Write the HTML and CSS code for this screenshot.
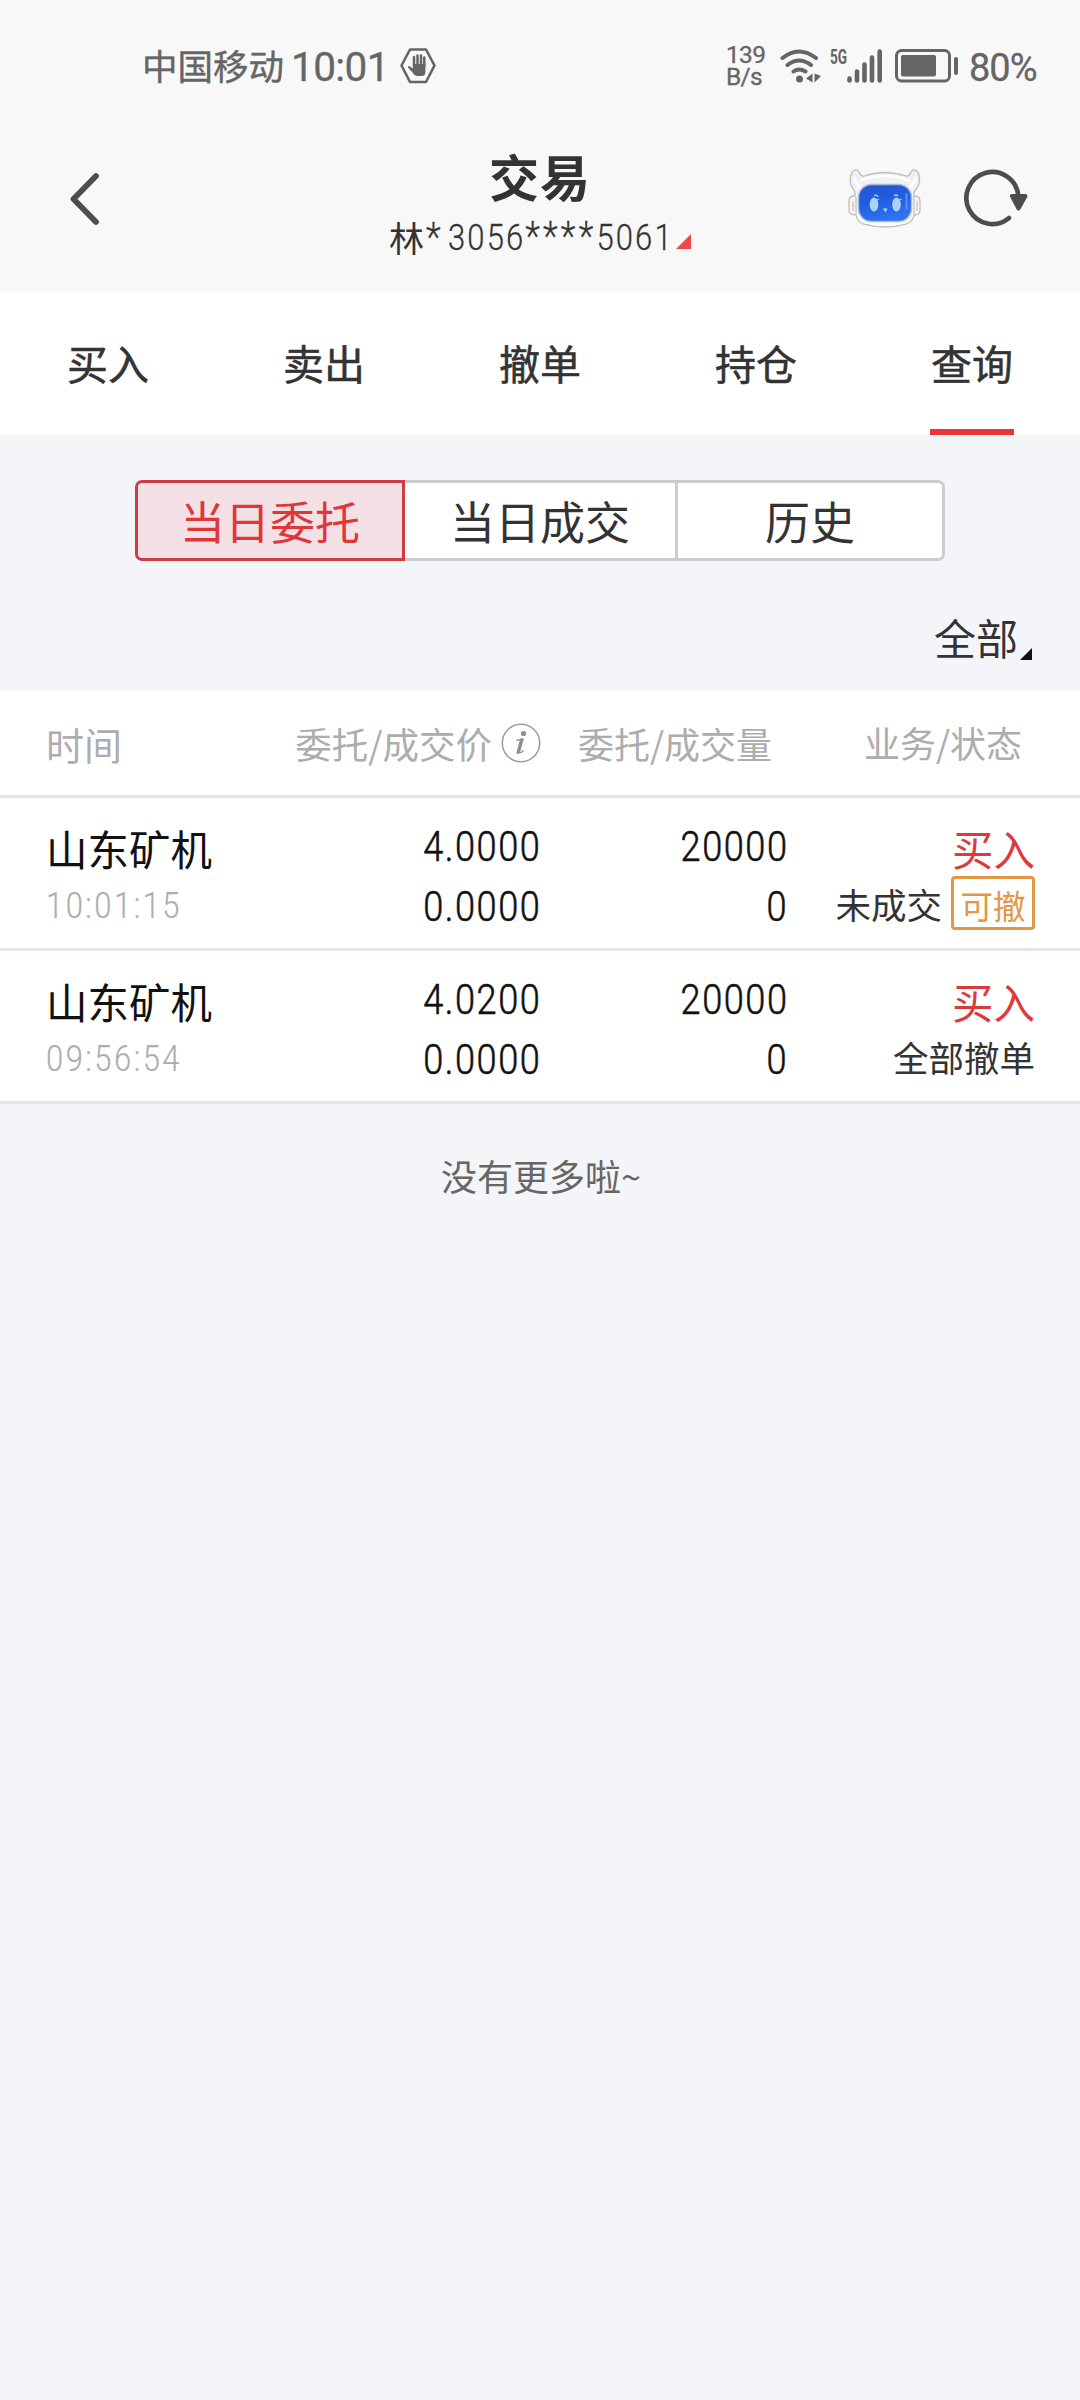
FILE: index.html
```html
<!DOCTYPE html>
<html lang="zh-CN">
<head>
<meta charset="utf-8">
<title>交易</title>
<link rel="stylesheet" href="styles.css">
</head>
<body>
<header class="top">
  <div class="status">
    <span class="carrier">中国移动</span>
    <span class="clock">10:01</span>
    <svg class="hand" width="36" height="36" viewBox="0 0 36 36">
      <path d="M10 1.500H26L34.500 17.500L26 34H10L1.500 17.500Z" fill="none" stroke="#656565" stroke-width="2.600" stroke-linejoin="round"/>
      <path d="M14 18V9M17.500 17V7.500M21 17V7.500M24.300 18V9.500" stroke="#656565" stroke-width="2.500" stroke-linecap="round"/>
      <path d="M12.900 16H25.400V24C25.400 27 24 28 21.500 28H17.500C15 28 14 26.500 12.500 24.500L8 19.500C7.500 18 9 17.500 10 18.500L12.900 20.500Z" fill="#656565"/>
    </svg>
    <span class="speed"><span>139</span><span>B/s</span></span>
    <svg class="wifi" width="42" height="34" viewBox="0 0 42 34">
      <g fill="none" stroke="#656565" stroke-width="4" stroke-linecap="round">
        <path d="M2.500 9Q19 -4 36 9M7.500 16Q19 7 31 16M13.500 22.500Q19 18.500 25.500 22.500"/>
      </g>
      <circle cx="19.500" cy="30" r="3.500" fill="#656565"/>
      <path d="M32.500 24.500V33.500L26 29.500ZM34.500 24.500V33.500L41 27Z" fill="#656565"/>
    </svg>
    <span class="gen">5G</span>
    <svg class="signal" width="36" height="34" viewBox="0 0 36 34">
      <path d="M2.500 29.500V31.500M10 22.500V31.500M17.500 15.500V31.500M25 8.500V31.500M32.700 2.500V31.500" stroke="#656565" stroke-width="4.600" stroke-linecap="round"/>
    </svg>
    <svg class="battery" width="64" height="34" viewBox="0 0 64 34">
      <rect x="1.500" y="1.500" width="53" height="30.500" rx="5" fill="none" stroke="#656565" stroke-width="3"/>
      <rect x="6" y="6" width="35" height="21.500" rx="2" fill="#656565"/>
      <rect x="59" y="8" width="4" height="18" rx="2" fill="#656565"/>
    </svg>
    <span class="percent">80%</span>
  </div>
  <div class="nav">
    <svg class="back" width="32" height="54" viewBox="0 0 32 54">
      <path d="M27 4L4.500 27L27 50" fill="none" stroke="#4d4d4d" stroke-width="5.800" stroke-linecap="round" stroke-linejoin="round"/>
    </svg>
    <div class="heading">
      <h1>交易</h1>
      <div class="account">
        <span class="owner">林</span><span class="num mask">*</span><span class="num digits">3056<span class="stars">****</span>5061</span>
        <svg width="15" height="15" viewBox="0 0 15 15"><path d="M15 0V15H0Z" fill="#f04848"/></svg>
      </div>
    </div>
    <div class="actions">
      <svg width="74" height="60" viewBox="0 0 74 60">
        <defs>
          <linearGradient id="face" x1="0" y1="0" x2="0.400" y2="1"><stop offset="0" stop-color="#2b55c8"/><stop offset="0.450" stop-color="#1f5be0"/><stop offset="1" stop-color="#2f72ee"/></linearGradient>
          <linearGradient id="shell" x1="0" y1="0" x2="0" y2="1"><stop offset="0" stop-color="#eceef2"/><stop offset="1" stop-color="#fdfdfe"/></linearGradient>
        </defs>
        <path d="M9 1C12 2 11 8 16 7Q36 0 58 7C63 8 62 2 65 1C71 0 74 11 69 19L66 23V27Q72 27 72 32V41Q72 46 66 46Q65 53 58 55Q37 61 16 55Q9 53 8 46Q1 46 1 41V32Q1 27 7 27V23L4 18C0 11 3 0 9 1Z" fill="url(#shell)" stroke="#bcbdc1" stroke-width="1.300"/>
        <path d="M12 12Q37 2 62 12M6 8Q8 15 13 19M68 8Q66 15 61 19" fill="none" stroke="#fff" stroke-width="2.500"/>
        <path d="M8 28V45M66 28V45" stroke="#c6cad4" stroke-width="1.500"/>
        <path d="M5 32V42M69 32V42" stroke="#dfbcb8" stroke-width="1.400"/>
        <rect x="10.500" y="15.500" width="53" height="37" rx="13" fill="url(#face)" stroke="#a9b9df" stroke-width="1.500"/>
        <ellipse cx="26" cy="35.500" rx="4.300" ry="7" fill="#a9d2f8"/><ellipse cx="48.500" cy="35.500" rx="4.300" ry="7" fill="#a9d2f8"/>
        <path d="M26 27Q29 25 30 28M46 27Q48 25 50 27M29 31L31 30M51.500 31L53.500 30" fill="none" stroke="#a9d2f8" stroke-width="1.300"/>
        <path d="M35 39.500H39.500L37.500 43.500Z" fill="#a9d2f8"/>
        <path d="M58.500 25V40" stroke="#5c8cf0" stroke-width="2" stroke-linecap="round"/>
      </svg>
      <svg width="65" height="58" viewBox="0 0 65 58">
        <path d="M45 49A26 26 0 1 1 54.300 27" fill="none" stroke="#4d4d4d" stroke-width="4.600" stroke-linecap="round"/>
        <path d="M48 27H61.500L54.500 39.500Z" fill="#4d4d4d" stroke="#4d4d4d" stroke-width="4" stroke-linejoin="round"/>
      </svg>
    </div>
  </div>
</header>

<nav class="tabs">
  <a>买入</a><a>卖出</a><a>撤单</a><a>持仓</a><a class="current">查询</a>
</nav>

<section class="filters">
  <div class="segments">
    <a class="selected">当日委托</a><a>当日成交</a><a>历史</a>
  </div>
  <div class="scope">全部<svg width="12" height="12" viewBox="0 0 12 12"><path d="M12 0V12H0Z" fill="#111"/></svg></div>
</section>

<main class="orders">
  <div class="row head">
    <div class="when">时间</div>
    <div class="price">委托/成交价<svg width="40" height="42" viewBox="0 0 40 42"><circle cx="20" cy="21" r="18.700" fill="none" stroke="#9b9b9b" stroke-width="1.500"/><circle cx="22.500" cy="11.500" r="2.600" fill="#8f8f8f"/><path d="M15.500 18.500Q19 17.500 22 17L18.500 29Q18 31.500 20.500 30.200L22.500 28.500" fill="none" stroke="#8f8f8f" stroke-width="1.400"/><path d="M20.500 18L17 30.500" stroke="#8f8f8f" stroke-width="3" stroke-linecap="round"/></svg></div>
    <div class="volume">委托/成交量</div>
    <div class="state">业务/状态</div>
  </div>
  <div class="row order">
    <div><div class="name">山东矿机</div><div class="time"><span class="num">10:01:15</span></div></div>
    <div class="value"><div><span class="num">4.0000</span></div><div><span class="num">0.0000</span></div></div>
    <div class="value"><div><span class="num">20000</span></div><div><span class="num">0</span></div></div>
    <div class="result"><div class="side">买入</div><div class="note">未成交<span class="badge">可撤</span></div></div>
  </div>
  <div class="row order">
    <div><div class="name">山东矿机</div><div class="time"><span class="num">09:56:54</span></div></div>
    <div class="value"><div><span class="num">4.0200</span></div><div><span class="num">0.0000</span></div></div>
    <div class="value"><div><span class="num">20000</span></div><div><span class="num">0</span></div></div>
    <div class="result"><div class="side">买入</div><div class="note">全部撤单</div></div>
  </div>
</main>
<p class="end">没有更多啦~</p>
</body>
</html>
```

FILE: styles.css
```css
* { box-sizing: border-box; }

body {
  margin: 0;
  min-height: 2400px;
  background: #f4f5f9;
  color: #333;
  font-family: "Noto Sans CJK SC", sans-serif;
  font-size: 36px;
}

svg { display: block; flex: none; }

.num {
  display: inline-block;
  font-family: Roboto, sans-serif;
  transform: scaleX(0.86);
}

/* Status bar and title bar */
.top { height: 291px; background: #f8f8f8; }

.status {
  display: flex;
  align-items: center;
  height: 131px;
  padding-left: 142px;
  color: #656565;
  line-height: 50px;
}
.carrier { width: 149px; font-size: 35.500px; padding-bottom: 1px; -webkit-text-stroke: 0.400px; }
.clock { width: 109px; font: 400 40.500px/50px Roboto, sans-serif; letter-spacing: -0.600px; padding-top: 3px; -webkit-text-stroke: 0.300px; }
.speed {
  display: flex;
  flex-direction: column;
  width: 54px;
  margin-left: 290px;
  padding-top: 1px;
  font: 400 24.500px/22px Roboto, sans-serif;
  letter-spacing: -0.700px;
  -webkit-text-stroke: 0.300px;
}
.wifi { margin-right: 8px; }
.gen { width: 17px; height: 34px; font: 700 20px/16px Roboto, sans-serif; transform: scaleX(0.68); transform-origin: left; }
.battery { margin: 0 10px 0 12px; }
.percent { font: 400 38px/50px Roboto, sans-serif; letter-spacing: -1px; padding-top: 5px; -webkit-text-stroke: 0.300px; }

.nav {
  display: grid;
  grid-template-columns: 340px 400px 340px;
  height: 160px;
}
.back { margin: 41px 0 0 69px; }
.heading { display: flex; flex-direction: column; align-items: center; padding-top: 11px; }
h1 { margin: 0; font-size: 50px; font-weight: 700; line-height: 66px; letter-spacing: 1px; }
.account { display: flex; align-items: flex-start; width: 304px; height: 60px; line-height: 60px; }
.account .num { font-weight: 300; transform-origin: left; -webkit-text-stroke: 0.300px; }
.owner { width: 38px; padding-left: 1px; line-height: 58px; font-size: 35px; }
.mask { width: 22px; font-size: 40px; }
.digits { width: 228px; letter-spacing: 2.500px; white-space: nowrap; }
.stars { letter-spacing: 3.700px; font-size: 40px; line-height: 1; }
.account svg { margin-top: 26px; }
.actions { display: flex; padding: 38px 0 0 108px; gap: 42px; }

/* Main tabs */
.tabs { display: flex; height: 144px; background: #fff; font-size: 41px; }
.tabs a { display: flex; flex: 1; flex-direction: column; align-items: center; line-height: 142px; -webkit-text-stroke: 0.500px; }
.current::after { content: ""; width: 84px; height: 6px; margin-top: -4px; background: #e93535; }

/* Order filters */
.filters { height: 255px; padding: 45px 48px 0 135px; }
.segments {
  display: grid;
  grid-template-columns: 270px 273px 267px;
  width: 810px;
  height: 81px;
  font-size: 45px;
  line-height: 75px;
  text-align: center;
}
.segments a { height: 81px; background: #fff; border: solid #ccc; border-width: 3px 3px 3px 0; }
.segments a:last-child { border-radius: 0 7px 7px 0; }
.segments .selected { background: #f3e1e5; border: 3px solid #cf3c42; border-radius: 7px 0 0 7px; color: #e13538; }
.scope { display: flex; justify-content: flex-end; align-items: flex-start; padding-top: 46px; gap: 2px; font-size: 42px; line-height: 60px; }
.scope svg { margin-top: 41px; }

/* Order table */
.row { display: grid; grid-template-columns: 210px 285px 247px 247px; padding-left: 46px; background: #fff; border-bottom: 3px solid #e5e6eb; }
.head { height: 108px; color: #adadad; font-size: 36px; line-height: 107px; }
.when { font-size: 38px; }
.price { display: flex; justify-content: flex-end; gap: 9px; font-size: 36.500px; white-space: nowrap; }
.price svg { margin-top: 32px; }
.volume { padding-right: 16px; text-align: right; }
.state { padding-right: 13px; line-height: 104px; text-align: right; }
.order { height: 153px; padding-top: 18px; }
.name { height: 60px; color: #111; font-size: 41.500px; line-height: 64px; }
.time { color: #adadad; font-family: Roboto, sans-serif; font-weight: 300; line-height: 60px; letter-spacing: 2.900px; -webkit-text-stroke: 0.200px; }
.time .num { transform-origin: left; }
.value { padding-top: 1px; color: #111; font-family: Roboto, sans-serif; font-size: 42px; font-weight: 300; line-height: 60px; letter-spacing: 1.800px; text-align: right; -webkit-text-stroke: 0.600px; }
.value .num { transform-origin: right; }
.side { height: 60px; color: #dc3a3c; font-size: 41.500px; line-height: 64px; text-align: right; }
.note { display: flex; justify-content: flex-end; height: 60px; gap: 9px; font-size: 35.500px; line-height: 56px; white-space: nowrap; }
.badge { width: 84px; height: 54px; border: 3px solid #e39643; border-radius: 4px; color: #e39643; font-size: 32.500px; line-height: 51px; text-align: center; }

.end { margin: 0; padding: 46px 0 0 2px; color: #666; line-height: 50px; text-align: center; }
```
